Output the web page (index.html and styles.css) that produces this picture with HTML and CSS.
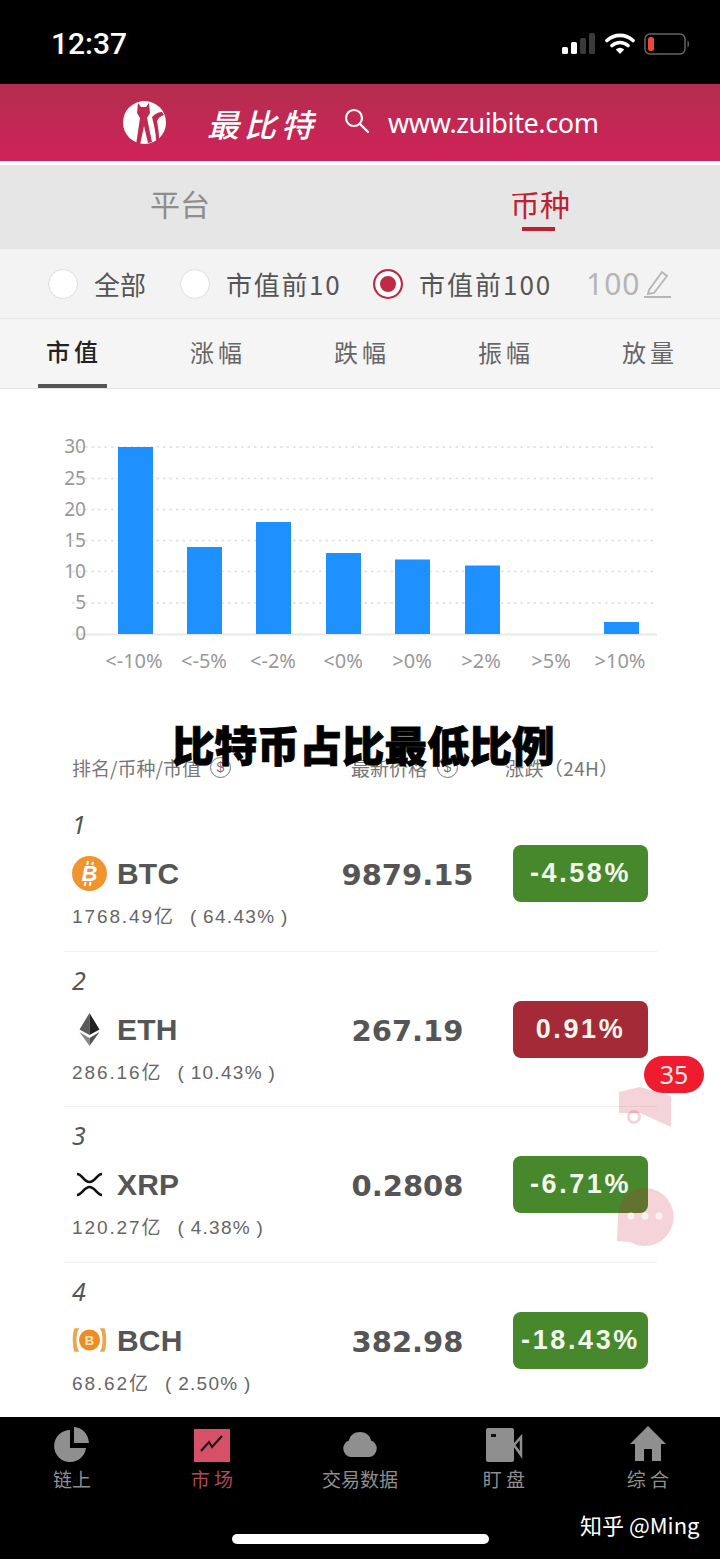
FILE: index.html
```html
<!DOCTYPE html>
<html lang="zh">
<head>
<meta charset="utf-8">
<title>最比特</title>
<link rel="stylesheet" href="styles.css">
</head>
<body>
<div class="app">
  <div class="status">
    <span class="time">12:37</span>
    <div class="status-icons">
      <svg class="sig" width="34" height="24" viewBox="0 0 34 24"><rect x="0" y="15" width="6" height="7" rx="1.5" fill="#fff"/><rect x="9" y="10" width="6" height="12" rx="1.5" fill="#fff"/><rect x="18" y="6" width="6" height="16" rx="1.5" fill="#3a3a3a"/><rect x="27" y="1" width="6" height="21" rx="1.5" fill="#3a3a3a"/></svg>
      <svg class="wifi" width="30" height="24" viewBox="0 0 30 24"><path d="M2 8.5a19 19 0 0 1 26 0M7 13.5a12 12 0 0 1 16 0" fill="none" stroke="#fff" stroke-width="3.6" stroke-linecap="round"/><path d="M10.800 17.500a6.500 6.500 0 0 1 8.400 0L15 22z" fill="#fff"/></svg>
      <svg class="bat" width="47" height="24" viewBox="0 0 47 24"><rect x="1" y="2" width="40" height="20" rx="5" fill="none" stroke="#666" stroke-width="1.500"/><rect x="4" y="5" width="6" height="14" rx="2.500" fill="#f0443e"/><path d="M43.500 8.500c2 .8 2 6.200 0 7z" fill="#666"/></svg>
    </div>
  </div>

  <header class="brand">
    <svg class="logo" width="43" height="43" viewBox="0 0 43 43"><circle cx="21.500" cy="21.500" r="21.500" fill="#fff"/><path d="M15 2l3 4h5l3-4 1 10-3 5 5 24-4 1-4-17-4 19h-4l4-27-3-5z" fill="#c12a50"/><path d="M29 16c4-4 7-5 10-5l2 3c-3 1-6 3-7 6 1 6 2 11 2 18l-3 2c0-8-2-16-4-24z" fill="#c12a50"/></svg>
    <span class="brand-name">最比特</span>
    <svg class="search" width="26" height="26" viewBox="0 0 26 26"><circle cx="10" cy="10" r="8" fill="none" stroke="#fff" stroke-width="2.200"/><path d="M16 16l8 8" stroke="#fff" stroke-width="2.400" stroke-linecap="round"/></svg>
    <span class="url">www.zuibite.com</span>
  </header>

  <nav class="tabs">
    <div class="tab">平台</div>
    <div class="tab tab-on">币种</div>
  </nav>

  <div class="filters">
    <span class="radio"></span><span class="flabel flabel-a">全部</span>
    <span class="radio"></span><span class="flabel flabel-b">市值前10</span>
    <span class="radio radio-on"></span><span class="flabel flabel-c">市值前100</span>
    <span class="limit">100</span>
    <svg width="28" height="30" viewBox="0 0 28 30"><path d="M6 21L19 3l5 4-13 17-6 1z" fill="none" stroke="#b5b5b5" stroke-width="1.800"/><path d="M1 28h27" stroke="#b5b5b5" stroke-width="2"/></svg>
  </div>

  <div class="subtabs">
    <div class="sub sub-on">市值</div>
    <div class="sub">涨幅</div>
    <div class="sub">跌幅</div>
    <div class="sub">振幅</div>
    <div class="sub">放量</div>
  </div>

  <svg class="chart" width="720" height="311" viewBox="0 389 720 311">
    <g class="grid">
      <path d="M72 447H657M72 478.500H657M72 509.500H657M72 540.500H657M72 571.500H657M72 603H657"/>
    </g>
    <path class="axis" d="M72 634.500H657"/>
    <g class="bars">
      <rect x="118" y="447" width="35" height="187"/>
      <rect x="187" y="547" width="35" height="87"/>
      <rect x="256" y="522" width="35" height="112"/>
      <rect x="326" y="553" width="35" height="81"/>
      <rect x="395" y="559.500" width="35" height="74.500"/>
      <rect x="465" y="565.500" width="35" height="68.500"/>
      <rect x="604" y="622" width="35" height="12"/>
    </g>
    <g class="ylab">
      <text x="86" y="453">30</text><text x="86" y="484.500">25</text><text x="86" y="515.500">20</text><text x="86" y="546.500">15</text><text x="86" y="577.500">10</text><text x="86" y="609">5</text><text x="86" y="640">0</text>
    </g>
    <g class="xlab">
      <text x="134" y="668">&lt;-10%</text><text x="204" y="668">&lt;-5%</text><text x="273" y="668">&lt;-2%</text><text x="343" y="668">&lt;0%</text><text x="412" y="668">&gt;0%</text><text x="481" y="668">&gt;2%</text><text x="551" y="668">&gt;5%</text><text x="620" y="668">&gt;10%</text>
    </g>
  </svg>

  <div class="thead">
    <span class="th th-a">排名/币种/市值</span><span class="coin">$</span>
    <span class="th th-b">最新价格</span><span class="coin">$</span>
    <span class="th th-c">涨跌（24H）</span>
  </div>

  <div class="list">
    <div class="row">
      <div class="rank">1</div>
      <div class="main">
        <svg width="35" height="35" viewBox="0 0 35 35"><circle cx="17.500" cy="17.500" r="17.500" fill="#f0952e"/><path d="M16 5l-.8 4M21 6l-.8 3M13.500 26l-.8 4M18.500 26l-.8 4" stroke="#fff" stroke-width="2"/><text class="btc-glyph" x="17.500" y="25">B</text></svg>
        <span class="ticker">BTC</span><span class="price">9879.15</span><span class="pct down">-4.58%</span>
      </div>
      <div class="cap">1768.49亿<span class="share">( 64.43% )</span></div>
    </div>
    <div class="row">
      <div class="rank">2</div>
      <div class="main">
        <svg width="35" height="35" viewBox="0 0 35 35"><path d="M17.500 1L7.500 17.500l10 5.500z" fill="#5a5a5a"/><path d="M17.500 1l10 16.500-10 5.500z" fill="#222"/><path d="M7.500 20l10 14v-8z" fill="#888"/><path d="M27.500 20l-10 14v-8z" fill="#555"/></svg>
        <span class="ticker">ETH</span><span class="price">267.19</span><span class="pct up">0.91%</span>
      </div>
      <div class="cap">286.16亿<span class="share">( 10.43% )</span></div>
    </div>
    <div class="row">
      <div class="rank">3</div>
      <div class="main">
        <svg width="35" height="35" viewBox="0 0 35 35"><path d="M5 7c5 0 7 8 12.500 8S25 7 30 7M5 28c5 0 7-8 12.500-8S25 28 30 28" fill="none" stroke="#111" stroke-width="2.600"/></svg>
        <span class="ticker">XRP</span><span class="price">0.2808</span><span class="pct down">-6.71%</span>
      </div>
      <div class="cap">120.27亿<span class="share">( 4.38% )</span></div>
    </div>
    <div class="row">
      <div class="rank">4</div>
      <div class="main">
        <svg width="35" height="35" viewBox="0 0 35 35"><circle cx="17.500" cy="17" r="10.500" fill="#ee8d22"/><text class="bch-glyph" x="17.500" y="21.500">B</text><path d="M6 6H3C1 11 1 23 3 28h3C3 23 3 11 6 6zM29 6h3c2 5 2 17 0 22h-3c3-5 3-17 0-22z" fill="#eaa650" stroke="#eaa650" stroke-width="1.500"/></svg>
        <span class="ticker">BCH</span><span class="price">382.98</span><span class="pct down">-18.43%</span>
      </div>
      <div class="cap">68.62亿<span class="share">( 2.50% )</span></div>
    </div>
  </div>

  <footer class="dock">
    <div class="dock-items">
      <div class="dock-item">
        <svg width="36" height="36" viewBox="0 0 36 36"><path d="M16 4a16 16 0 1 0 16 18H16z" fill="#8f8f8f"/><path d="M20 1c8 .5 14 6 15 16H20z" fill="#8f8f8f"/></svg>
        <span>链上</span>
      </div>
      <div class="dock-item dock-on">
        <svg width="36" height="36" viewBox="0 0 36 36"><rect y="3" width="36" height="33" fill="#d65068"/><path d="M7 25l8-9 3 5 10-11" fill="none" stroke="#1a1a1a" stroke-width="2.200"/></svg>
        <span>市 场</span>
      </div>
      <div class="dock-item">
        <svg width="36" height="36" viewBox="0 0 36 36"><path d="M9 31a8.500 8.500 0 0 1-2-16.500C8 9 12.500 6 18 6s10 3 11 8.500A8.500 8.500 0 0 1 27 31z" fill="#8f8f8f"/></svg>
        <span>交易数据</span>
      </div>
      <div class="dock-item">
        <svg width="38" height="36" viewBox="0 0 38 36"><rect x="1" y="2" width="28" height="34" rx="2" fill="#8f8f8f"/><path d="M29 19l7-8v18z" fill="none" stroke="#8f8f8f" stroke-width="2.500"/><rect x="6" y="8" width="5" height="3" fill="#111"/></svg>
        <span>盯 盘</span>
      </div>
      <div class="dock-item">
        <svg width="36" height="36" viewBox="0 0 36 36"><path d="M18 0L36 18h-5v17H22V23h-8v12H5V18H0z" fill="#8f8f8f"/></svg>
        <span>综 合</span>
      </div>
    </div>
    <div class="home-bar"></div>
    <div class="mark">知乎 @Ming</div>
  </footer>

  <h1 class="title">比特币占比最低比例</h1>

  <svg class="float-horn" width="54" height="42" viewBox="0 0 54 42"><path d="M1 6l21-5 31 9v31L22 27H1z" fill="#c8283c" fill-opacity=".2"/><circle cx="16" cy="31" r="5.500" fill="none" stroke="#c8283c" stroke-opacity=".2" stroke-width="3"/></svg>
  <div class="float-count">35</div>
  <svg class="float-chat" width="60" height="60" viewBox="0 0 60 60"><path d="M30 1a29 29 0 1 1-15 54L2 54l1-26C4 12 15 1 30 1z" fill="#c8283c" fill-opacity=".2"/><circle cx="16" cy="29" r="3.500" fill="#fff" fill-opacity=".7"/><circle cx="30" cy="29" r="3.500" fill="#fff" fill-opacity=".7"/><circle cx="44" cy="29" r="3.500" fill="#fff" fill-opacity=".7"/></svg>
</div>
</body>
</html>
```
FILE: styles.css
```css
* { box-sizing: border-box; }
html, body { margin: 0; padding: 0; background: #fff; }
body { font-family: "Noto Sans CJK SC", "Liberation Sans", sans-serif; }
.app { position: relative; width: 720px; height: 1559px; overflow: hidden; display: flex; flex-direction: column; background: #fff; }

.status { height: 84px; flex: none; background: #000; display: flex; align-items: center; justify-content: space-between; padding: 3px 29px 0 51px; }
.time { color: #fff; font: 500 30px/1 Roboto, sans-serif; }
.status-icons { display: flex; align-items: center; gap: 9px; }

.brand { height: 77px; flex: none; background: linear-gradient(#b32e4d, #d0225a); display: flex; align-items: center; padding-left: 123px; color: #fff; }
.logo { flex: none; }
.brand-name { margin-left: 41px; width: 110px; font-size: 32px; font-weight: 500; line-height: 1; font-style: italic; letter-spacing: 5px; white-space: nowrap; }
.search { margin-left: 27px; margin-top: -4px; flex: none; }
.url { margin-left: 18px; font: 400 27px/1 "Noto Sans", sans-serif; letter-spacing: -.4px; white-space: nowrap; }

.tabs { margin-top: 4px; height: 84px; flex: none; background: #e6e6e6; display: grid; grid-template-columns: 360px 360px; }
.tab { position: relative; display: flex; align-items: center; justify-content: center; font-size: 30px; color: #8e8e8e; padding-bottom: 8px; }
.tab-on { color: #bf2030; }
.tab-on::after { content: ""; position: absolute; left: 162px; top: 62px; width: 33px; height: 4px; background: #bf2030; }

.filters { height: 70px; flex: none; background: #f3f3f3; border-bottom: 1px solid #e6e6e6; display: flex; align-items: center; padding-left: 48px; }
.radio { width: 30px; height: 30px; flex: none; border-radius: 50%; background: #fff; border: 1.500px solid #ddd; }
.radio-on { border: 2px solid #c12a44; background: #c12a44; box-shadow: inset 0 0 0 5px #fff; }
.flabel { margin-left: 16px; font-size: 26px; line-height: 1; color: #555; white-space: nowrap; }
.flabel-a { width: 86px; }
.flabel-b { width: 147px; letter-spacing: 1.700px; }
.flabel-c { width: 167px; letter-spacing: 2px; }
.limit { font: 400 30px/1 "Noto Sans", sans-serif; color: #b5b5b5; width: 57px; letter-spacing: 1px; }

.subtabs { height: 70px; flex: none; background: #f5f5f5; border-bottom: 1px solid #e4e4e4; display: grid; grid-template-columns: repeat(5, 144px); }
.sub { position: relative; display: flex; align-items: center; justify-content: center; font-size: 24px; line-height: 1; letter-spacing: 4px; color: #666; padding: 0 0 4px 4px; }
.sub-on { color: #222; padding-bottom: 6px; font-weight: 500; }
.sub-on::after { content: ""; position: absolute; left: 38px; bottom: 0; width: 69px; height: 4px; background: #555; }

.chart { display: block; flex: none; }
.grid path { stroke: #ddd; stroke-width: 1.500; stroke-dasharray: 2.500 4; fill: none; }
.axis { stroke: #e8e8e8; stroke-width: 2; fill: none; }
.bars rect { fill: #1e90ff; }
.ylab text { font: 400 19px "Noto Sans", sans-serif; fill: #999; text-anchor: end; }
.xlab text { font: 400 20px "Noto Sans", sans-serif; fill: #999; text-anchor: middle; }

.thead { height: 96px; flex: none; display: flex; align-items: center; padding: 39px 0 0 72px; color: #777; }
.th { font-size: 19px; line-height: 1; white-space: nowrap; }
.th-a { width: 138px; }
.th-b { margin-left: 120px; width: 86px; }
.th-c { margin-left: 47px; letter-spacing: .4px; }
.coin { width: 21px; height: 21px; flex: none; border: 1.500px solid #777; border-radius: 50%; font: 400 14px/18px "Liberation Sans", sans-serif; text-align: center; }

.list { flex: none; height: 621px; margin: 0 63px 0 64px; }
.row { height: 155.500px; padding: 14px 9px 0 8px; border-bottom: 1px solid #f0f0f0; }
.row:last-child { border-bottom: 0; }
.rank { height: 30px; font: italic 400 25px/28px "Noto Sans", sans-serif; color: #555; }
.main { margin-top: 5px; height: 57px; display: grid; grid-template-columns: 45px 223px 135px 135px; align-items: center; }
.ticker { font: 700 30px/1 "Liberation Sans", sans-serif; color: #555; letter-spacing: .2px; padding-top: 1px; }
.price { font: 700 29px/1 "DejaVu Sans", sans-serif; color: #555; text-align: center; white-space: nowrap; padding-top: 4px; }
.pct { width: 135px; height: 57px; margin-left: 38px; border-radius: 8px; display: flex; align-items: center; justify-content: center; color: #f2f7ee; font: 700 27px/1 "Liberation Sans", sans-serif; letter-spacing: 2.600px; white-space: nowrap; }
.down { background: #47882d; }
.up { background: #a52a38; }
.cap { height: 30px; font: 400 19px/30px "Liberation Sans", "Noto Sans CJK SC", sans-serif; color: #666; letter-spacing: 1.900px; white-space: nowrap; }
.share { margin-left: 15px; letter-spacing: 1.300px; word-spacing: -1px; }
.btc-glyph { font: italic 700 22px "Liberation Sans", sans-serif; fill: #fff; text-anchor: middle; }
.bch-glyph { font: 700 13px "Liberation Sans", sans-serif; fill: #fbe3c4; text-anchor: middle; }

.dock { position: relative; flex: 1; background: #000; }
.dock-items { display: grid; grid-template-columns: repeat(5, 144px); padding-top: 9px; }
.dock-item { display: flex; flex-direction: column; align-items: center; gap: 3px; color: #8f8f8f; font-size: 19px; line-height: 28px; white-space: nowrap; }
.dock-on { color: #b04a58; padding-right: 8px; }
.home-bar { position: absolute; left: 232px; top: 117px; width: 257px; height: 10px; border-radius: 5px; background: #fff; }
.mark { position: absolute; left: 580px; top: 91px; color: #fff; font: 400 22px/32px "Noto Sans CJK SC", sans-serif; white-space: nowrap; }

.title { position: absolute; left: 172px; top: 713px; width: 384px; margin: 0; font-size: 42.500px; line-height: 62px; font-weight: 900; color: #000; white-space: nowrap; -webkit-text-stroke: .8px #000; }
.float-count { position: absolute; left: 644px; top: 1056px; width: 60px; height: 37px; border-radius: 19px; background: #ee1c2e; color: #fbe9e9; font: 400 25px/37px "Noto Sans", sans-serif; text-align: center; }
.float-horn { position: absolute; left: 618px; top: 1086px; }
.float-chat { position: absolute; left: 615px; top: 1187px; }
```
